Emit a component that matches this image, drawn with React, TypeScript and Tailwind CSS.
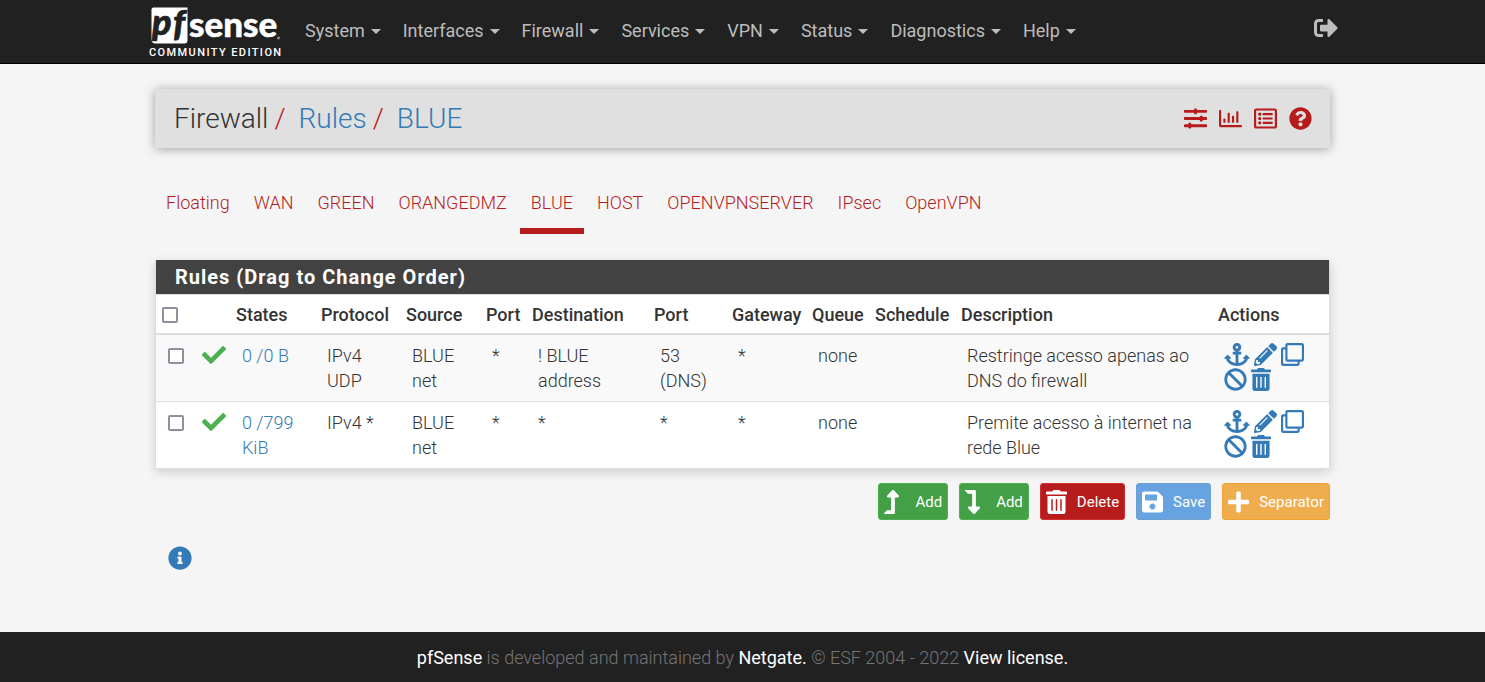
import type { ReactNode } from 'react'
import type { IconType } from 'react-icons'
import {
  FaAnchor,
  FaBan,
  FaCheck,
  FaInfoCircle,
  FaLevelDownAlt,
  FaLevelUpAlt,
  FaPencilAlt,
  FaPlus,
  FaQuestionCircle,
  FaRegChartBar,
  FaRegClone,
  FaRegListAlt,
  FaSave,
  FaSignOutAlt,
  FaSlidersH,
  FaTrashAlt,
} from 'react-icons/fa'

const menus = ['System', 'Interfaces', 'Firewall', 'Services', 'VPN', 'Status', 'Diagnostics', 'Help']
const tabs = ['Floating', 'WAN', 'GREEN', 'ORANGEDMZ', 'BLUE', 'HOST', 'OPENVPNSERVER', 'IPsec', 'OpenVPN']

const shortcuts: { label: string; icon: IconType }[] = [
  { label: 'Advanced settings', icon: FaSlidersH },
  { label: 'Related status', icon: FaRegChartBar },
  { label: 'Related log entries', icon: FaRegListAlt },
  { label: 'Help for this page', icon: FaQuestionCircle },
]

const rules = [
  {
    states: '0 /0 B',
    cells: ['IPv4 UDP', 'BLUE net', '*', '! BLUE address', '53 (DNS)', '*', 'none', ''],
    description: 'Restringe acesso apenas ao DNS do firewall',
  },
  {
    states: '0 /799 KiB',
    cells: ['IPv4 *', 'BLUE net', '*', '*', '*', '*', 'none', ''],
    description: 'Premite acesso à internet na rede Blue',
  },
]

// icon glyphs differ in width, so each one carries its own size
const actions: { label: string; icon: IconType; size: string }[] = [
  { label: 'Add associated anchor', icon: FaAnchor, size: 'h-[23px] w-[26px]' },
  { label: 'Edit', icon: FaPencilAlt, size: 'h-[23px] w-[23px]' },
  { label: 'Copy', icon: FaRegClone, size: 'h-[23px] w-[23px]' },
  { label: 'Disable', icon: FaBan, size: 'h-[23px] w-[23px]' },
  { label: 'Delete this rule', icon: FaTrashAlt, size: 'h-[23px] w-5' },
]

function Logo() {
  return (
    <a href="#" aria-label="pfSense home" className="block">
      <svg width="134" height="62" viewBox="0 0 134 62" aria-hidden="true">
        <path d="M5.500 7.500H39.500V40.500Q39.500 43.500 36.500 43.500H7.500Q3.500 43.500 3.500 39.500V9.500Q3.500 7.500 5.500 7.500Z" fill="#fff" />
        <g fontFamily="Lato, sans-serif" fontWeight="900">
          <g fontStyle="italic" fontSize="36" fill="#212121" stroke="#212121" strokeWidth="0.7">
            <text x="4" y="35">p</text>
            <text x="25" y="36">f</text>
          </g>
          <text x="41" y="37" fontSize="35" fill="#fff" stroke="#fff" strokeWidth="0.5">sense</text>
        </g>
        <circle cx="130.500" cy="38" r="1" fill="none" stroke="#fff" strokeWidth="0.6" />
        <text x="1" y="56" fontFamily="Roboto, sans-serif" fontWeight="500" fontSize="11" letterSpacing="1.4" fill="#fff">
          COMMUNITY EDITION
        </text>
      </svg>
    </a>
  )
}

function Checkbox({ label }: { label: string }) {
  return (
    <input
      type="checkbox"
      aria-label={label}
      className="block size-4 appearance-none rounded-xs border-2 border-[#8f8f9d] bg-white checked:bg-[#337ab7]"
    />
  )
}

interface ActionButtonProps {
  icon: IconType
  className: string
  iconSize?: string
  children: ReactNode
}

function ActionButton({ icon: Icon, className, iconSize = 'h-6 w-[21px]', children }: ActionButtonProps) {
  return (
    <button
      type="button"
      className={`flex h-[37px] items-center gap-[10px] rounded-[3px] border px-[5px] text-[15px] leading-5 text-white ${className}`}
    >
      <span className="w-[21px]">
        <Icon className={iconSize} />
      </span>
      {children}
    </button>
  )
}

export default function App() {
  return (
    <div className="flex min-h-screen flex-col bg-[#f5f5f5] font-[Roboto,sans-serif] text-lg leading-[25px] font-light text-[#333]">
      <nav className="h-16 border-b border-black bg-[#212121]">
        <div className="mx-auto flex max-w-[1191px] items-start justify-between pl-px">
          <div className="flex items-start">
            <Logo />
            <ul className="flex gap-[22px] pt-[18px] pl-[23px]">
              {menus.map((menu) => (
                <li key={menu}>
                  <button type="button" className="flex items-center gap-[6px] font-normal text-[#bdbdbd]">
                    {menu}
                    <svg width="10" height="5" viewBox="0 0 10 5" fill="currentColor" className="mt-[2px]" aria-hidden="true">
                      <path d="M0 0H10L5 5Z" />
                    </svg>
                  </button>
                </li>
              ))}
            </ul>
          </div>
          <a href="#" aria-label="Logout" className="pt-4 text-[#bdbdbd]">
            <FaSignOutAlt size={24} />
          </a>
        </div>
      </nav>

      <main className="mx-auto w-full max-w-[1175px] flex-1 pt-[25px]">
        <header className="flex h-[59px] items-center justify-between bg-[#e0e0e0] pr-[18px] pl-[19px] shadow-[0_1px_10px_rgba(0,0,0,0.35)]">
          <h1 className="flex text-[28px] leading-8">
            Firewall
            <span className="mr-[13px] ml-[6px] text-[#b71c1c]">/</span>
            <a href="#" className="text-[#337ab7]">Rules</a>
            <span className="mr-[13px] ml-[6px] text-[#b71c1c]">/</span>
            <a href="#" className="text-[#337ab7]">BLUE</a>
          </h1>
          <div className="flex gap-3 text-[#b71c1c]">
            {shortcuts.map(({ label, icon: Icon }) => (
              <a key={label} href="#" aria-label={label}>
                <Icon size={23} />
              </a>
            ))}
          </div>
        </header>

        <ul className="mt-10 flex gap-[2px]">
          {tabs.map((tab) => (
            <li key={tab}>
              <a
                href="#"
                className={`block border-b-6 px-[11px] pt-[2px] pb-[13px] text-[#b71c1c] ${tab === 'BLUE' ? 'border-[#b71c1c]' : 'border-transparent'}`}
              >
                {tab}
              </a>
            </li>
          ))}
        </ul>

        <section className="mt-[26px] border border-t-0 border-[#ddd] bg-white shadow-[0_3px_10px_rgba(0,0,0,0.16)]">
          <h2 className="border-b border-[#ddd] bg-[#424242] px-[19px] pt-[5px] pb-1 text-xl leading-[25px] font-bold tracking-[1px] text-white">
            Rules (Drag to Change Order)
          </h2>
          <table className="w-full table-fixed text-left">
            <colgroup>
              <col className="w-10" />
              <col className="w-[34px]" />
              <col className="w-[85px]" />
              <col className="w-[85px]" />
              <col className="w-20" />
              <col className="w-[46px]" />
              <col className="w-[122px]" />
              <col className="w-[78px]" />
              <col className="w-20" />
              <col className="w-[63px]" />
              <col className="w-[86px]" />
              <col />
              <col className="w-[117px]" />
            </colgroup>
            <thead>
              <tr className="border-b-2 border-[#ddd] [&>th]:px-[6px] [&>th]:pt-[7px] [&>th]:pb-[6px] [&>th]:font-medium">
                <th><Checkbox label="Select all rules" /></th>
                <th />
                <th>States</th>
                <th>Protocol</th>
                <th>Source</th>
                <th>Port</th>
                <th>Destination</th>
                <th>Port</th>
                <th>Gateway</th>
                <th>Queue</th>
                <th>Schedule</th>
                <th>Description</th>
                <th>Actions</th>
              </tr>
            </thead>
            <tbody>
              {rules.map((rule) => (
                <tr
                  key={rule.description}
                  className="align-top odd:bg-[#f9f9f9] not-last:border-b not-last:border-[#ddd] [&>td]:pt-2 [&>td]:pr-2 [&>td]:pb-2 [&>td]:pl-3"
                >
                  <td><div className="pt-[5px]"><Checkbox label={`Select rule ${rule.description}`} /></div></td>
                  <td><FaCheck size={24} className="-ml-[6px] text-[#4caf50]" /></td>
                  <td><a href="#" className="text-[#337ab7]">{rule.states}</a></td>
                  {rule.cells.map((cell, i) => (
                    <td key={i}>{cell}</td>
                  ))}
                  <td>{rule.description}</td>
                  <td>
                    <div className="flex flex-wrap gap-x-1 text-[#337ab7]">
                      {actions.map(({ label, icon: Icon, size }) => (
                        <a key={label} href="#" aria-label={label} className="h-[25px]">
                          <Icon className={size} />
                        </a>
                      ))}
                    </div>
                  </td>
                </tr>
              ))}
            </tbody>
          </table>
        </section>

        <div className="mt-[14px] flex justify-end gap-[11px] font-normal">
          <ActionButton icon={FaLevelUpAlt} iconSize="h-6 w-[15px]" className="border-[#4caf50] bg-[#43a047]">Add</ActionButton>
          <ActionButton icon={FaLevelDownAlt} iconSize="h-6 w-[15px]" className="border-[#4caf50] bg-[#43a047]">Add</ActionButton>
          <ActionButton icon={FaTrashAlt} className="border-[#d32f2f] bg-[#b71c1c]">Delete</ActionButton>
          <ActionButton icon={FaSave} className="border-[#6d9fd0] bg-[#67a3e0]">Save</ActionButton>
          <ActionButton icon={FaPlus} className="border-[#eea236] bg-[#f0ad4e]">Separator</ActionButton>
        </div>

        <button type="button" aria-label="Show information" className="mt-[26px] ml-[13px] block text-[#337ab7]">
          <FaInfoCircle size={24} />
        </button>
      </main>

      <footer className="flex h-[50px] items-center justify-center bg-[#212121] text-[#757575]">
        <p>
          <a href="#" className="font-normal text-white">pfSense</a> is developed and maintained by{' '}
          <a href="#" className="font-normal text-white">Netgate.</a> © ESF 2004 - 2022{' '}
          <a href="#" className="font-normal text-white">View license.</a>
        </p>
      </footer>
    </div>
  )
}
